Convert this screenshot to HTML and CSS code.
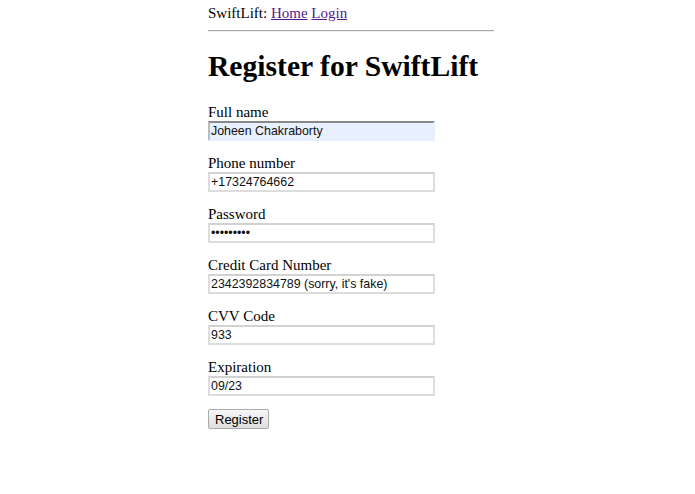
FILE: index.html
```html
<!DOCTYPE html>
<html>
<head>
<meta charset="utf-8">
<title>Register for SwiftLift</title>
<link rel="stylesheet" href="styles.css">
</head>
<body>
<div class="page">
  <nav class="nav">SwiftLift: <a href="#">Home</a> <a href="#">Login</a></nav>
  <hr class="rule">
  <h1 class="title">Register for SwiftLift</h1>
  <form class="form">
    <div class="field">
      <label class="label">Full name</label>
      <input class="input autofill" type="text" value="Joheen Chakraborty">
    </div>
    <div class="field">
      <label class="label">Phone number</label>
      <input class="input" type="text" value="+17324764662">
    </div>
    <div class="field">
      <label class="label">Password</label>
      <input class="input" type="password" value="123456789">
    </div>
    <div class="field">
      <label class="label">Credit Card Number</label>
      <input class="input" type="text" value="2342392834789 (sorry, it's fake)">
    </div>
    <div class="field">
      <label class="label">CVV Code</label>
      <input class="input" type="text" value="933">
    </div>
    <div class="field">
      <label class="label">Expiration</label>
      <input class="input" type="text" value="09/23">
    </div>
    <div class="actions">
      <button class="btn" type="button">Register</button>
    </div>
  </form>
</div>
</body>
</html>
```
FILE: styles.css
```css
html, body {
  margin: 0;
  padding: 0;
  background: #fff;
}
body {
  font-family: "Liberation Serif", "Times New Roman", serif;
  font-size: 15px;
  color: #000;
}
.page {
  width: 286px;
  margin-left: 208px;
  padding-top: 5px;
}
.nav {
  line-height: 17px;
}
.nav a {
  color: #551a8b;
}
.rule {
  margin: 8px 0 0 0;
  border: none;
  border-top: 1px solid #aaa;
  border-bottom: 1px solid #eee;
  height: 0;
}
.title {
  font-size: 29.6px;
  font-weight: bold;
  margin: 17px 0 19px 0;
  line-height: 35px;
  white-space: nowrap;
}
.form {
  display: flex;
  flex-direction: column;
  gap: 13px;
}
.field {
  display: flex;
  flex-direction: column;
  align-items: flex-start;
}
.label {
  line-height: 18px;
}
.input {
  box-sizing: border-box;
  width: 227px;
  height: 20px;
  margin: 0;
  padding: 0 1px;
  border: 2px solid #ddd;
  border-top-color: #d2d2d2;
  font-family: "Liberation Sans", Arial, sans-serif;
  font-size: 12.4px;
  color: #111;
  background: #fff;
}
.input.autofill {
  background: #e8f0fe;
  border-color: #e8f0fe;
  border-top-color: #888;
  border-left-color: #bbb;
}
.actions {
  padding-top: 0;
}
.btn {
  box-sizing: border-box;
  width: 61px;
  height: 20px;
  padding: 0 6px;
  margin: 0;
  font-family: "Liberation Sans", Arial, sans-serif;
  font-size: 13px;
  color: #000;
  background: linear-gradient(#f6f6f6, #dedede);
  border: 1px solid #aaa;
  border-radius: 2px;
}
```
